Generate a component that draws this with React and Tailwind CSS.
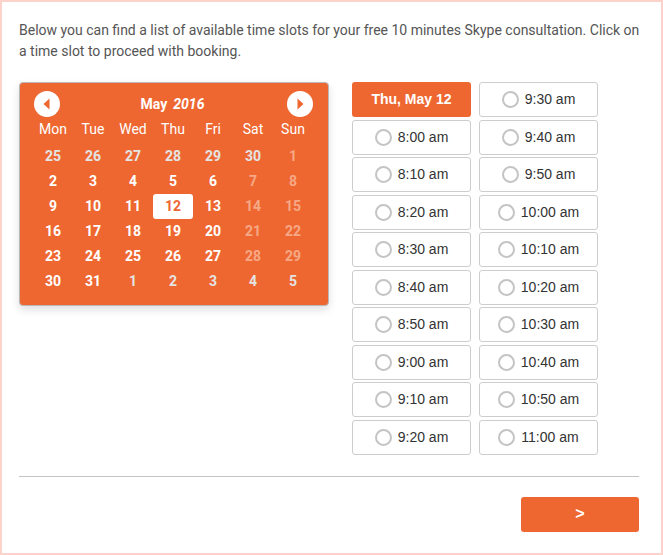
import React from "react";

const ORANGE = "#ee6731";

const weeks = [
  [["25", "o"], ["26", "o"], ["27", "o"], ["28", "o"], ["29", "o"], ["30", "o"], ["1", "w"]],
  [["2", "n"], ["3", "n"], ["4", "n"], ["5", "n"], ["6", "n"], ["7", "w"], ["8", "w"]],
  [["9", "n"], ["10", "n"], ["11", "n"], ["12", "s"], ["13", "n"], ["14", "w"], ["15", "w"]],
  [["16", "n"], ["17", "n"], ["18", "n"], ["19", "n"], ["20", "n"], ["21", "w"], ["22", "w"]],
  [["23", "n"], ["24", "n"], ["25", "n"], ["26", "n"], ["27", "n"], ["28", "w"], ["29", "w"]],
  [["30", "n"], ["31", "n"], ["1", "o"], ["2", "o"], ["3", "o"], ["4", "o"], ["5", "o"]],
];

const days = ["Mon", "Tue", "Wed", "Thu", "Fri", "Sat", "Sun"];

const col1 = ["8:00 am", "8:10 am", "8:20 am", "8:30 am", "8:40 am", "8:50 am", "9:00 am", "9:10 am", "9:20 am"];
const col2 = ["9:30 am", "9:40 am", "9:50 am", "10:00 am", "10:10 am", "10:20 am", "10:30 am", "10:40 am", "10:50 am", "11:00 am"];

function Arrow({ dir }) {
  return (
    <div className="w-[26px] h-[26px] rounded-full bg-white flex items-center justify-center">
      <svg width="10" height="12" viewBox="0 0 10 12">
        {dir === "left" ? (
          <path d="M7.5 0.5 L7.5 11.5 L1.5 6 Z" fill="#ee6731" />
        ) : (
          <path d="M2.5 0.5 L2.5 11.5 L8.5 6 Z" fill="#ee6731" />
        )}
      </svg>
    </div>
  );
}

function Slot({ label }) {
  return (
    <div className="h-[35px] w-[119px] border border-[#cdcdcd] rounded-[3px] bg-white flex items-center justify-center gap-[6px]">
      <span className="w-[17px] h-[17px] rounded-full border-2 border-[#c4c4c4] box-border" />
      <span className="text-[14px] text-[#333]">{label}</span>
    </div>
  );
}

export default function App() {
  return (
    <div className="w-[663px] h-[555px] border-2 border-[#fdd2cb] bg-white box-border">
      <div className="pl-[17px] pr-[10px] pt-[18px]">
        <p
          className="text-[14px] leading-[21px] text-[#555] w-[630px]"
          style={{ fontFamily: "Roboto, sans-serif" }}
        >
          Below you can find a list of available time slots for your free 10 minutes Skype consultation. Click on a time slot to proceed with booking.
        </p>

        <div className="flex mt-[20px] gap-[23px]">
          {/* Calendar */}
          <div className="self-start">
            <div
              className="w-[310px] h-[224px] rounded-[4px] border border-[#b9b9b9] pl-[13px] pr-[15px] pt-[8px] shadow-[0_4px_8px_rgba(0,0,0,0.12)]"
              style={{ backgroundColor: ORANGE, fontFamily: "Roboto, sans-serif" }}
            >
              <div className="flex items-center justify-between pl-[1px]">
                <Arrow dir="left" />
                <div className="text-white font-bold text-[14px] flex gap-[6px] pr-[2px]">
                  <span>May</span>
                  <span className="italic">2016</span>
                </div>
                <Arrow dir="right" />
              </div>
              <div className="grid grid-cols-7 w-[280px] h-[25px] items-center">
                {days.map((d) => (
                  <div key={d} className="text-center text-white text-[14px]">
                    {d}
                  </div>
                ))}
              </div>
              <div className="w-[280px] mt-[2px]">
                {weeks.map((w, i) => (
                  <div key={i} className="grid grid-cols-7 h-[25px]">
                    {w.map(([n, t], j) => {
                      let cls = "text-white";
                      if (t === "o") cls = "text-[#e4e4e4]";
                      if (t === "w") cls = "text-[#f6a886]";
                      if (t === "s") cls = "bg-white rounded-[3px] text-[#ee6731]";
                      return (
                        <div
                          key={j}
                          className={`flex items-center justify-center font-bold text-[14px] ${cls}`}
                        >
                          {n}
                        </div>
                      );
                    })}
                  </div>
                ))}
              </div>
            </div>
          </div>

          {/* Slots */}
          <div className="flex gap-[8px]" style={{ fontFamily: "'Liberation Sans', Arial, sans-serif" }}>
            <div className="flex flex-col gap-[2.5px]">
              <div
                className="h-[35px] w-[119px] rounded-[3px] flex items-center justify-center text-white font-bold text-[14px]"
                style={{ backgroundColor: ORANGE }}
              >
                Thu, May 12
              </div>
              {col1.map((s) => (
                <Slot key={s} label={s} />
              ))}
            </div>
            <div className="flex flex-col gap-[2.5px]">
              {col2.map((s) => (
                <Slot key={s} label={s} />
              ))}
            </div>
          </div>
        </div>

        <div className="mt-[21px] h-px bg-[#c4c4c4] w-[620px]" />

        <div className="flex justify-end w-[620px] mt-[20px]">
          <button
            className="w-[118px] h-[35px] rounded-[3px] text-white font-bold text-[16px] flex items-center justify-center"
            style={{ backgroundColor: ORANGE, fontFamily: "'Liberation Sans', Arial, sans-serif" }}
          >
            &gt;
          </button>
        </div>
      </div>
    </div>
  );
}
